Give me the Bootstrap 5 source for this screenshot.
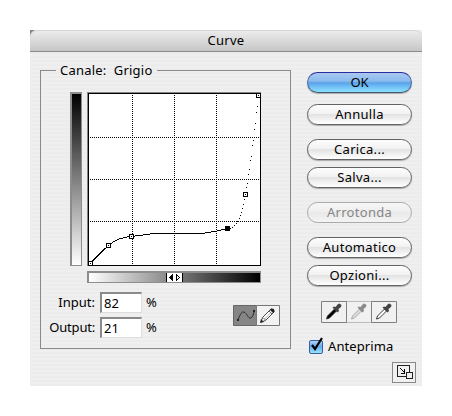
<!DOCTYPE html>
<html lang="it">
<head>
<meta charset="utf-8">
<title>Curve</title>
<meta name="viewport" content="width=device-width, initial-scale=1">
<link href="https://cdn.jsdelivr.net/npm/bootstrap@5.3.0/dist/css/bootstrap.min.css" rel="stylesheet">
<style>
body{font:13px/20px "Noto Sans","Open Sans",sans-serif;color:#000;background:#fff;overflow:hidden}
.window{width:392px;height:356px;margin:30px 0 0 30px;background:repeating-linear-gradient(#efefef 0 2px,#ececec 2px 4px)}
.corner-bg{background:linear-gradient(135deg,#858585 0 4px,transparent 5px)}
.titlebar{height:22px;padding-bottom:2px;border-bottom:1px solid #8b8b8b;border-radius:7px 7px 0 0;background:linear-gradient(#ededed,#dcdcdc 45%,#c6c6c6);box-shadow:inset 0 1px #d6d6d6;letter-spacing:.25px}
.group{width:251px;height:289px;border:1px solid #898989;padding:11px 0 0 29px;margin:8px 0 0 10px}
.group legend{float:none;width:101px;height:21px;margin:0 0 0 -14px;padding:0 0 0 4px;font-size:13px;line-height:21px;white-space:pre;letter-spacing:.22px}
.ramp{border:2px solid #8c8c8c}
.ramp-v{width:12px;height:174px;border-width:2px 1px 1px 2px;background:linear-gradient(#000,#fff)}
.ramp-h{width:174px;height:12px;margin-top:5px;border-width:2px 1px 1px 2px;background:linear-gradient(90deg,#fff,#000)}
.ramp-h svg{margin:0 0 0 77px}
.values{width:126px;margin:9px 0 0 -22px}
.line{height:21px}
.line label{width:47px;white-space:nowrap}
.line .tight{letter-spacing:-.2px}
.line .field{width:42px;height:21px;border:2px solid #8a8a8a;border-right:1px solid #ddd;border-bottom:1px solid #ddd;background:#fff;padding:0 0 0 2px;margin-left:5px;font-size:13px;line-height:18px;color:#000;outline:0}
.tools{width:47px;height:21px;margin:22px 0 0 59px}
.side{width:105px;margin:20px 0 0 16px}
.aqua{height:21px;padding:0;border:1px solid #626262;border-radius:11px;font-size:13px;line-height:19px;color:#000;background:linear-gradient(#fdfdfd,#f2f2f2 45%,#e3e3e3 50%,#f4f4f4 80%,#fff);box-shadow:0 1px 1px #aaa;letter-spacing:.3px}
.aqua:hover{color:#000;border-color:#626262}
.aqua:disabled{opacity:1;color:#858585;border-color:#aaa;box-shadow:none;background:linear-gradient(#f6f6f6,#efefef 45%,#e9e9e9 50%,#f4f4f4)}
.aqua-ok{border-color:#2c2d9c #49679b #45596e;background:linear-gradient(#a9c8f0,#8dbbee 42%,#5aa2ea 52%,#70bff6 72%,#8be0ff);letter-spacing:0}
.after-ok{margin-top:11px}
.gap-wide{margin-top:14px}
.gap-tight{margin-top:7px}
.droppers{width:76px;height:22px;margin:15px 0 0 14px}
.preview{margin:12px 0 0 1px;height:22px;letter-spacing:.1px}
.expand{width:24px;height:21px;margin:5px 0 0 85px}
svg{display:block;flex:none}
</style>
</head>
<body>
<main class="window">
  <div class="corner-bg"><header class="titlebar d-flex align-items-center justify-content-center">Curve</header></div>
  <div class="d-flex align-items-start">
    <fieldset class="group">
      <legend>Canale:  Grigio</legend>
      <div class="d-flex">
        <div class="ramp ramp-v"></div>
        <div class="ms-1">
          <svg width="175" height="174" viewBox="86 92 175 174" shape-rendering="crispEdges">
            <path fill="#858585" d="M87 92h174v174H87z"/><path d="M88 93h173v173H88z"/><path fill="#fff" d="M89 94h171v171H89z"/>
            <path stroke="#000" stroke-dasharray="1 1" fill="none" d="M132.500 95V265M174.500 95V265M216.500 95V265M90 137.500H260M90 179.500H260M90 221.500H260"/>
            <path fill="none" stroke="#000" d="M90 263.500L104 249.500Q107 247 109 245Q118 237.500 131 236.500Q143 235 154 233.500H202Q216 231.500 228 228.500"/>
            <path d="M230 228h1v1h-1zM232 227h1v1h-1zM234 225h1v1h-1zM236 223h1v1h-1zM237 221h1v1h-1zM239 218h1v1h-1zM240 215h1v1h-1zM241 212h1v1h-1zM242 208h1v1h-1zM243 204h1v1h-1zM244 199h1v1h-1zM246 187h1v1h-1zM247 183h1v1h-1zM248 174h1v1h-1zM249 169h1v1h-1zM250 160h1v1h-1zM251 156h1v1h-1zM252 145h1v1h-1zM253 140h1v1h-1zM254 129h1v1h-1zM255 123h1v1h-1zM256 112h1v1h-1zM257 106h1v1h-1z"/>
            <g fill="#fff" stroke="#000"><path d="M88.500 261.500h4v4h-4zM106.500 243.500h4v4h-4zM129.500 234.500h4v4h-4zM243.500 192.500h4v4h-4zM256.500 93.500h4v4h-4z"/></g>
            <path d="M90 263h1v1h-1zM108 245h1v1h-1zM131 236h1v1h-1zM245 194h1v1h-1zM258 95h1v1h-1zM225 226h5v5h-5z"/>
          </svg>
          <div class="ramp ramp-h ms-auto">
            <svg width="17" height="9" viewBox="0 0 17 9" shape-rendering="crispEdges"><path fill="#fff" d="M0 0h17v9H0z"/><path d="M0 0h1v9H0zM16 0h1v9h-1zM6 1h1v7H6zM5 2h1v5H5zM4 3h1v3H4zM3 4h1v1H3zM10 1h1v7h-1zM11 2h1v1h-1zM12 3h1v1h-1zM13 4h1v1h-1zM12 5h1v1h-1zM11 6h1v1h-1z"/></svg>
          </div>
        </div>
      </div>
      <div class="d-flex">
        <div class="values d-grid">
          <div class="line d-flex"><label class="text-end" for="in">Input:</label><input class="field" id="in" value="82"><span class="ms-1">%</span></div>
          <div class="line d-flex mt-1"><label class="text-end tight" for="out">Output:</label><input class="field" id="out" value="21"><span class="ms-1">%</span></div>
        </div>
        <svg class="tools" viewBox="0 0 47 21"><path fill="#858585" stroke="#666" d="M.5.500h23v20H.5z"/><path fill="#f2f2f2" stroke="#777" d="M23.500.500h23v20h-23z"/><path d="M5 15Q8 6 11 7C14 8 15 14 18 13Q20 12 21 7" fill="none" stroke="#303030"/><path fill="#222" d="M4 14h2v2H4zM20 5h2v2h-2z"/><path d="M28 17l1.500-4.500 8.500-8.500 2.500.5.500 2.500-8.500 8.500z" fill="#fff" stroke="#333" stroke-width=".9"/><path d="M30 12.500l2.500 2.500M36 6l3 3" stroke="#444" stroke-width=".8"/><path d="M31.500 14l6.500-6.500" stroke="#999" stroke-width=".8"/><path d="M27 18l1-4 3 3zM38 3.500l3 .5.500 2.500-1.500 1.500-3-3z" fill="#222"/></svg>
      </div>
    </fieldset>
    <div class="side d-flex flex-column">
      <button class="btn aqua aqua-ok">OK</button>
      <button class="btn aqua after-ok">Annulla</button>
      <button class="btn aqua gap-wide">Carica...</button>
      <button class="btn aqua gap-tight">Salva...</button>
      <button class="btn aqua gap-wide" disabled>Arrotonda</button>
      <button class="btn aqua gap-wide">Automatico</button>
      <button class="btn aqua gap-tight">Opzioni...</button>
      <svg class="droppers" viewBox="0 0 76 22">
        <defs><path id="body" d="M5.500 18l1-3 7-7 2 2-7 7z"/><path id="bulb" d="M11.500 6.500l1.500-1 1.500.5 2.500-3 1.500-.5 2 1.500-.5 2-2.500 2 .5 2-1.500 1.500z"/></defs>
        <path fill="#f1f1f1" stroke="#bbb" d="M25.500.500h25v21h-25z"/><path fill="#f1f1f1" stroke="#808080" d="M.5.500h25v21H.5zM50.500.500h25v21h-25z"/>
        <use href="#body" fill="#000" stroke="#222" stroke-width=".8"/><use href="#bulb" fill="#444"/>
        <g transform="translate(25)"><use href="#body" fill="#ddd" stroke="#999" stroke-width=".8"/><use href="#bulb" fill="#8c8c8c"/></g>
        <g transform="translate(50)"><use href="#body" fill="#fff" stroke="#222" stroke-width=".9"/><use href="#bulb" fill="#444"/></g>
      </svg>
      <div class="preview d-flex align-items-center">
        <svg width="16" height="18" viewBox="0 0 16 18"><defs><linearGradient id="blue" x2="0" y2="1"><stop stop-color="#b9d6f6"/><stop offset=".45" stop-color="#67a9ee"/><stop offset="1" stop-color="#9ce9ff"/></linearGradient></defs><rect x="1.500" y="3.500" width="13" height="13" rx="1.500" fill="url(#blue)" stroke="#3c5ca0"/><path d="M4 8l3 4 7-11" fill="none" stroke="#000" stroke-width="2.200"/></svg>
        <span class="ms-1">Anteprima</span>
      </div>
      <svg class="expand" viewBox="0 0 24 21" shape-rendering="crispEdges"><path fill="#f0f0f0" stroke="#888" d="M.5.500h23v20H.5z"/><path d="M14 14.500H5.500v-11h12V10" fill="none" stroke="#222"/><path d="M8 6l4.500 4.500M12.500 7v4.500h-4" fill="none" stroke="#000"/><path d="M14.500 10.500h6v6h-6z" fill="#eee" stroke="#222"/></svg>
    </div>
  </div>
</main>
<script src="https://cdn.jsdelivr.net/npm/bootstrap@5.3.0/dist/js/bootstrap.bundle.min.js"></script>
</body>
</html>
